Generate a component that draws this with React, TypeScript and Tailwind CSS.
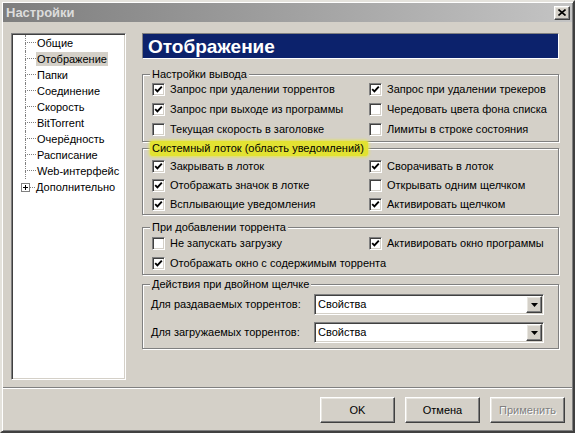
import React from "react";

const sunken =
  "border border-t-[#808080] border-l-[#808080] border-b-white border-r-white shadow-[inset_1px_1px_0_#404040,inset_-1px_-1px_0_#d4d0c8]";
const raised =
  "border border-t-white border-l-white border-b-[#404040] border-r-[#404040] shadow-[inset_-1px_-1px_0_#808080,inset_1px_1px_0_#e8e6e0]";
const etched =
  "border border-[#808080] shadow-[1px_1px_0_#fff,inset_1px_1px_0_#fff]";

function Check({ checked }: { checked?: boolean }) {
  return (
    <span className={`w-[13px] h-[13px] bg-white flex items-center justify-center shrink-0 ${sunken}`}>
      {checked && (
        <svg width="9" height="9" viewBox="0 0 9 9">
          <path d="M1.2 4.2 L3.4 6.4 L7.8 1.6" stroke="#000" strokeWidth="1.9" fill="none" />
        </svg>
      )}
    </span>
  );
}

function Row({ label, checked, h }: { label: string; checked?: boolean; h: string }) {
  return (
    <div className={`flex items-center gap-[5px] ${h}`}>
      <Check checked={checked} />
      <span className="whitespace-nowrap">{label}</span>
    </div>
  );
}

function Group({
  legend,
  highlight,
  className,
  children,
}: {
  legend: string;
  highlight?: boolean;
  className: string;
  children: React.ReactNode;
}) {
  return (
    <div className={`relative ${etched} ${className}`}>
      <span
        className={`absolute -top-[8px] left-[7px] h-[15px] leading-[15px] px-[2px] whitespace-nowrap ${
          highlight
            ? "bg-[#e2e232] rounded-[3px] shadow-[0_0_3px_1px_#e6e650] pr-[4px]"
            : "bg-[#d4d0c8]"
        }`}
      >
        {legend}
      </span>
      {children}
    </div>
  );
}

function Select({ label }: { label: string }) {
  return (
    <div className="flex items-center h-[21px]">
      <span className="w-[163px] whitespace-nowrap">{label}</span>
      <div className={`w-[230px] h-[21px] bg-white flex items-center ${sunken} p-[1px]`}>
        <span className="flex-1 pl-[2px]">Свойства</span>
        <span className={`w-[16px] h-full bg-[#d4d0c8] flex items-center justify-center ${raised}`}>
          <svg width="7" height="4" viewBox="0 0 7 4">
            <path d="M0 0 H7 L3.5 4 Z" fill="#000" />
          </svg>
        </span>
      </div>
    </div>
  );
}

function Connector() {
  return (
    <div className="w-[11px] h-full flex flex-col ml-[12px] shrink-0">
      <div className="h-[8px] border-l border-b border-dotted border-[#808080]" />
      <div className="flex-1 border-l border-dotted border-[#808080]" />
    </div>
  );
}

const treeItems = [
  "Общие",
  "Отображение",
  "Папки",
  "Соединение",
  "Скорость",
  "BitTorrent",
  "Очерёдность",
  "Расписание",
  "Web-интерфейс",
];

function Button({ label, disabled }: { label: string; disabled?: boolean }) {
  return (
    <div
      className={`w-[75px] h-[26px] bg-[#d4d0c8] flex items-center justify-center ${raised} ${
        disabled ? "text-[#808080] [text-shadow:1px_1px_0_#fff]" : "text-black"
      }`}
    >
      {label}
    </div>
  );
}

export default function App() {
  return (
    <div className="w-[575px] h-[433px] bg-[#d4d0c8] border-2 border-t-[#e4e2dc] border-l-[#e4e2dc] border-r-[#404040] border-b-[#404040] shadow-[inset_1px_1px_0_#fff,inset_-1px_-1px_0_#808080] p-[1px] flex flex-col font-['Liberation_Sans',Arial,sans-serif] text-[11px] leading-none text-black overflow-hidden">
      {/* Title bar */}
      <div className="h-[19px] shrink-0 bg-linear-to-r from-[#7e7e7e] to-[#c4c4c4] flex items-center justify-between pl-[3px] pr-[2px]">
        <span className="font-bold text-[13px] text-[#dcdcdc]">Настройки</span>
        <span className={`w-[16px] h-[14px] bg-[#d4d0c8] flex items-center justify-center ${raised}`}>
          <svg width="8" height="7" viewBox="0 0 8 7">
            <path d="M0.5 0.5 L7.5 6.5 M7.5 0.5 L0.5 6.5" stroke="#000" strokeWidth="1.6" />
          </svg>
        </span>
      </div>

      {/* Main */}
      <div className="flex mt-[11px]">
        {/* Tree */}
        <div className={`ml-[8px] w-[115px] h-[347px] bg-white p-[1px] shrink-0 ${sunken}`}>
          <div className="flex flex-col">
            {treeItems.map((t, i) => (
              <div key={t} className="flex items-center h-[16px]">
                <Connector />
                <span
                  className={`px-[1px] h-[14px] leading-[14px] whitespace-nowrap ${
                    i === 1 ? "bg-[#d4d0c8]" : ""
                  }`}
                >
                  {t}
                </span>
              </div>
            ))}
            <div className="flex items-center h-[16px]">
              <div className="w-[9px] h-[9px] ml-[8px] border border-[#808080] bg-white flex items-center justify-center shrink-0">
                <svg width="5" height="5" viewBox="0 0 5 5">
                  <path d="M0 2.5 H5 M2.5 0 V5" stroke="#000" strokeWidth="1" />
                </svg>
              </div>
              <div className="w-[5px] border-t border-dotted border-[#808080] shrink-0" />
              <span className="px-[1px] whitespace-nowrap">Дополнительно</span>
            </div>
          </div>
        </div>

        {/* Right panel */}
        <div className="ml-[16px] w-[417px] flex flex-col">
          <div className="h-[26px] bg-[#0c226c] border border-t-[#808080] border-l-[#808080] border-b-white border-r-white flex items-center pl-[5px]">
            <span className="text-white font-bold text-[19px]">Отображение</span>
          </div>

          <Group legend="Настройки вывода" className="mt-[15px] pt-[4px] pb-[2px] pl-[9px]">
            <div className="grid grid-cols-[217px_1fr]">
              <Row h="h-[20px]" checked label="Запрос при удалении торрентов" />
              <Row h="h-[20px]" checked label="Запрос при удалении трекеров" />
              <Row h="h-[20px]" checked label="Запрос при выходе из программы" />
              <Row h="h-[20px]" label="Чередовать цвета фона списка" />
              <Row h="h-[20px]" label="Текущая скорость в заголовке" />
              <Row h="h-[20px]" label="Лимиты в строке состояния" />
            </div>
          </Group>

          <Group
            legend="Системный лоток (область уведомлений)"
            highlight
            className="mt-[6px] pt-[8px] pb-[0px] pl-[9px]"
          >
            <div className="grid grid-cols-[217px_1fr]">
              <Row h="h-[19px]" checked label="Закрывать в лоток" />
              <Row h="h-[19px]" checked label="Сворачивать в лоток" />
              <Row h="h-[19px]" checked label="Отображать значок в лотке" />
              <Row h="h-[19px]" label="Открывать одним щелчком" />
              <Row h="h-[19px]" checked label="Всплывающие уведомления" />
              <Row h="h-[19px]" checked label="Активировать щелчком" />
            </div>
          </Group>

          <Group legend="При добавлении торрента" className="mt-[12px] pt-[5px] pb-[1px] pl-[9px]">
            <div className="grid grid-cols-[217px_1fr]">
              <Row h="h-[20px]" label="Не запускать загрузку" />
              <Row h="h-[20px]" checked label="Активировать окно программы" />
              <div className="col-span-2">
                <Row h="h-[20px]" checked label="Отображать окно с содержимым торрента" />
              </div>
            </div>
          </Group>

          <Group legend="Действия при двойном щелчке" className="mt-[9px] pt-[9px] pb-[5px] pl-[8px]">
            <div className="flex flex-col gap-[7px]">
              <Select label="Для раздаваемых торрентов:" />
              <Select label="Для загружаемых торрентов:" />
            </div>
          </Group>
        </div>
      </div>

      {/* Separator */}
      <div className="mt-[7px] border-t border-t-[#808080] border-b border-b-white" />

      {/* Buttons */}
      <div className="mt-[8px] flex justify-end gap-[10px] pr-[7px]">
        <Button label="OK" />
        <Button label="Отмена" />
        <Button label="Применить" disabled />
      </div>
    </div>
  );
}
